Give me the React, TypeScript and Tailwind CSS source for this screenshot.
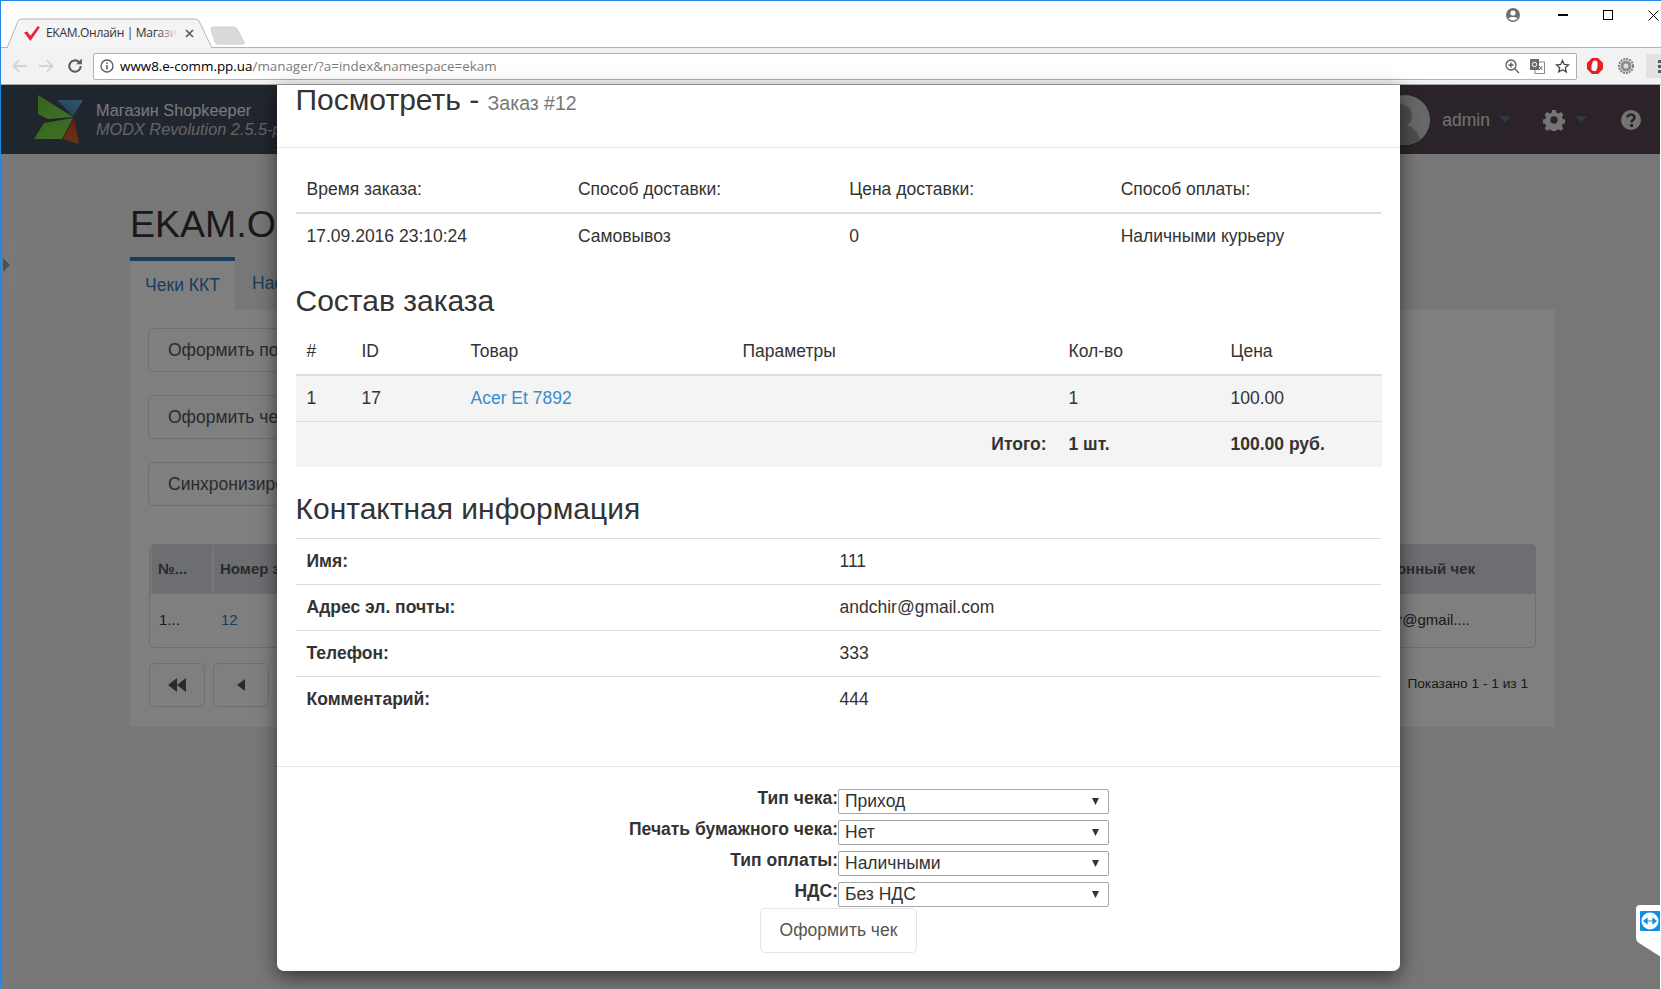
const Caret = ({ className = '' }: { className?: string }) => (
  <svg width="12" height="7" viewBox="0 0 12 7" className={className}>
    <path d="M0 0h12L6 7z" fill="currentColor" />
  </svg>
);

// Browser chrome at the top of the window
const BrowserBar = () => (
  <div className="font-['Open_Sans',sans-serif]">
    <div className="relative flex h-[48px] border-b border-[#b4b4b4] bg-white">
      <div className="relative z-10 ml-[7px] mt-[18px] flex h-[30px] w-[206px] items-center pl-[17px]">
        <svg className="absolute inset-0" width="206" height="30" viewBox="0 0 206 30">
          <path d="M0 30 11 3Q12 1 15 1H188Q191 1 192 3L205 30" fill="#f4f4f4" stroke="#b4b4b4" />
        </svg>
        <svg className="relative -ml-[1px]" width="18" height="16" viewBox="0 0 17 15">
          <path d="M1 7l3-1 3 4 7-9 2 1-9 13z" fill="#ee2436" />
        </svg>
        <div className="relative ml-[5px] w-[132px] overflow-hidden">
          <span className="block whitespace-nowrap text-[12px] tracking-[-0.3px] text-[#333]">EKAM.Онлайн | Магазин</span>
          <div className="absolute inset-y-0 right-0 w-[22px] bg-gradient-to-r from-transparent to-[#f4f4f4]" />
        </div>
        <svg className="relative ml-[7px]" width="9" height="9" viewBox="0 0 9 9">
          <path d="M1 1l7 7M8 1L1 8" stroke="#5a5a5a" strokeWidth="1.7" />
        </svg>
      </div>
      <svg className="mt-[26px] -ml-[3px]" width="36" height="20" viewBox="0 0 36 20">
        <path d="M1 3Q1 1 3 1H24Q26 1 27 3L34 16Q35 18 33 18H8Q6 18 5 16z" fill="#dadada" stroke="#cfcfcf" />
      </svg>
      <svg className="absolute left-[1505px] top-[7px]" width="16" height="16" viewBox="0 0 16 16">
        <circle cx="8" cy="8" r="7" fill="#6e6e6e" />
        <circle cx="8" cy="6" r="2.6" fill="#fff" />
        <path d="M3.4 11.6C4.5 9.6 11.5 9.6 12.6 11.6 11 14 5 14 3.4 11.6z" fill="#fff" />
      </svg>
      <div className="absolute left-[1558px] top-[14px] h-[1.5px] w-[10px] bg-black" />
      <div className="absolute left-[1603px] top-[10px] h-[10px] w-[10px] border border-black" />
      <svg className="absolute left-[1648px] top-[10px]" width="11" height="11" viewBox="0 0 11 11">
        <path d="M.5.5l10 10M10.5.5l-10 10" stroke="#000" strokeWidth="1" />
      </svg>
    </div>
    <div className="flex h-[37px] items-center border-b border-[#a8a8a8] bg-[#f2f2f2]">
      <div className="flex w-[93px] items-center pl-[11px]">
        <svg width="16" height="16" viewBox="0 0 14 14" fill="none" stroke="#d4d4d4" strokeWidth="1.6">
          <path d="M14 7H2M7 2 2 7l5 5" />
        </svg>
        <svg className="ml-[12px]" width="16" height="16" viewBox="0 0 14 14" fill="none" stroke="#d4d4d4" strokeWidth="1.6">
          <path d="M0 7h12M7 2l5 5-5 5" />
        </svg>
        <svg className="ml-[12px]" width="16" height="16" viewBox="0 0 14 14" fill="none" stroke="#5a5a5a" strokeWidth="1.8">
          <path d="M12 7a5 5 0 1 1-1.5-3.5" />
          <path d="M13 .5v5H8z" fill="#5a5a5a" stroke="none" />
        </svg>
      </div>
      <div className="flex h-[27px] w-[1484px] items-center rounded-[2px] border border-[#b0b0b0] bg-white pl-[6px] pr-[6px]">
        <svg width="14" height="14" viewBox="0 0 14 14" fill="none" stroke="#5a5a5a" strokeWidth="1.3">
          <circle cx="7" cy="7" r="6" />
          <path d="M7 6v4.5M7 3.5v1.5" strokeWidth="1.5" />
        </svg>
        <span className="ml-[6px] whitespace-nowrap text-[13.400px] text-black">
          www8.e-comm.pp.ua<span className="text-[#7b7b7b]">/manager/?a=index&amp;namespace=ekam</span>
        </span>
        <svg className="ml-auto" width="15" height="15" viewBox="0 0 15 15" fill="none" stroke="#5a5a5a" strokeWidth="1.3">
          <circle cx="6" cy="6" r="5" />
          <path d="M3.5 6h5M6 3.5v5M9.5 9.5 14 14" />
        </svg>
        <svg className="ml-[10px]" width="15" height="15" viewBox="0 0 15 15">
          <rect x="5" y="3" width="9.5" height="11.5" fill="#fff" stroke="#8a8a8a" />
          <rect x="0" y="0" width="9" height="11" fill="#6b6b6b" />
          <circle cx="4.5" cy="5.5" r="2.2" fill="none" stroke="#fff" />
          <path d="M9 7l3.5 4M12.5 7 9 11" stroke="#6b6b6b" />
        </svg>
        <svg className="ml-[10px]" width="15" height="15" viewBox="0 0 15 15" fill="none" stroke="#444" strokeWidth="1.3">
          <path d="M7.5 1.5l1.8 4 4.2.4-3.2 2.8 1 4.3-3.8-2.3-3.8 2.3 1-4.3L1.500 5.900l4.200-.4z" />
        </svg>
      </div>
      <svg className="ml-[10px]" width="16" height="16" viewBox="0 0 16 16">
        <path d="M5 0h6l5 5v6l-5 5H5l-5-5V5z" fill="#ea1c24" />
        <path d="M4.500 11.500V7L5.500 5V3.500h1.200V2.500h2.600v1h1.200V9L9 13H6z" fill="#fff" />
      </svg>
      <svg className="ml-[15px]" width="16" height="16" viewBox="0 0 16 16">
        <circle cx="8" cy="8" r="7" fill="none" stroke="#7c7c7c" strokeWidth="2" strokeDasharray="2 1" />
        <circle cx="8" cy="8" r="5.500" fill="#8c8c8c" />
        <circle cx="8" cy="8" r="2.500" fill="#dcdcdc" />
      </svg>
      <div className="ml-[12px] flex h-[24px] flex-1 items-center justify-end bg-[#e2e2e2]">
        <div className="flex flex-col gap-[2px]">
          <span className="h-[3px] w-[3px] bg-[#5a5a5a]" />
          <span className="h-[3px] w-[3px] bg-[#5a5a5a]" />
          <span className="h-[3px] w-[3px] bg-[#5a5a5a]" />
        </div>
      </div>
    </div>
  </div>
);

// MODX manager page behind the dialog
const ManagerHeader = () => (
  <div className="flex h-[69px] items-center bg-gradient-to-r from-[#3e4e5c] to-[#584652] pl-[33px] text-white">
    <svg width="52" height="50" viewBox="0 0 52 50">
      <defs>
        <linearGradient id="mb" x1="0" y1="1" x2="1" y2="0">
          <stop offset="0" stopColor="#3f78a8" />
          <stop offset="1" stopColor="#62b0ea" />
        </linearGradient>
        <linearGradient id="mr" x1="0" y1="0" x2="0" y2="1">
          <stop offset="0" stopColor="#e8341c" />
          <stop offset="1" stopColor="#c86a30" />
        </linearGradient>
        <linearGradient id="mg" x1="0" y1="0" x2="1" y2="1">
          <stop offset="0" stopColor="#6cc83c" />
          <stop offset="1" stopColor="#86e04c" />
        </linearGradient>
      </defs>
      <path d="M5 0 40 22 15 24 5 19z" fill="url(#mg)" />
      <path d="M24 5H50L40 21z" fill="url(#mb)" />
      <path d="M11 28 40 23 29 44H1z" fill="url(#mg)" />
      <path d="M41 23 46 49 30 44z" fill="url(#mr)" />
    </svg>
    <div className="ml-[11px] mt-[1px] whitespace-nowrap text-[16.300px] leading-[19px] text-[#f2f2f2]">
      <div>Магазин Shopkeeper</div>
      <div className="italic text-[#c8c8c8]">MODX Revolution 2.5.5-pl</div>
    </div>
    <div className="ml-auto flex items-center text-[#e4e4e4]">
      <div className="relative h-[50px] w-[50px] overflow-hidden rounded-full bg-[#d0d0d0]">
        <div className="absolute left-[8px] top-[9px] h-[24px] w-[24px] rounded-full bg-[#9a9a9a]" />
        <div className="absolute left-[-2px] top-[30px] h-[34px] w-[42px] rounded-full bg-[#9a9a9a]" />
      </div>
      <span className="ml-[12px] mt-[2px] text-[17.500px]">admin</span>
      <Caret className="ml-[9px] text-[#5c7076]" />
      <svg className="ml-[32px]" width="22" height="22" viewBox="0 0 24 24">
        <path
          fill="#e8e8e8"
          fillRule="evenodd"
          d="M10 1h4l.6 3 2.300 1 2.600-1.700 2.800 2.800-1.700 2.600 1 2.300 3 .6v4l-3 .6-1 2.300 1.700 2.600-2.800 2.800-2.600-1.700-2.300 1-.6 3h-4l-.6-3-2.300-1-2.600 1.700-2.800-2.800 1.700-2.600-1-2.300-3-.6v-4l3-.6 1-2.300L1.700 6.100 4.500 3.300l2.600 1.700 2.300-1zM12 8a4 4 0 1 0 0 8 4 4 0 0 0 0-8z"
        />
      </svg>
      <Caret className="ml-[10px] text-[#5c7076]" />
      <svg className="ml-[34px] mr-[20px]" width="20" height="20" viewBox="0 0 20 20">
        <circle cx="10" cy="10" r="10" fill="#e8e8e8" />
        <path d="M6.500 7.500C6.500 3.500 13.500 3.500 13.500 7.500 13.500 10 10.500 9.800 10.500 12.500" fill="none" stroke="#584652" strokeWidth="2.600" />
        <rect x="9" y="14" width="3" height="3" fill="#584652" />
      </svg>
    </div>
  </div>
);

const GhostButton = ({ children }: { children: string }) => (
  <div className="flex h-[44px] w-[400px] items-center rounded-[5px] border border-[#ddd] bg-white pl-[19px] text-[17.500px] text-[#555]">
    {children}
  </div>
);

const ManagerPage = () => (
  <div className="flex h-[835px] bg-[#eeeeee]">
    <div className="flex w-[10px] flex-col bg-[#f3f3f3]">
      <div className="mt-[85px] flex h-[51px] w-[15px] shrink-0 items-center rounded-r-[3px] bg-[#f3f3f3] pl-[3px]">
        <svg width="7" height="14" viewBox="0 0 7 14">
          <path d="M0 0l7 7-7 7z" fill="#9aa4ad" />
        </svg>
      </div>
    </div>
    <div className="ml-[120px] w-[1425px] pt-[50px]">
      <h1 className="h-[53px] text-[37.500px] leading-[41px] text-[#333]">EKAM.Онлайн</h1>
      <div className="flex h-[53px]">
        <div className="flex w-[105px] items-center justify-center border-t-[4px] border-[#337ab7] bg-white text-[17.500px] text-[#337ab7]">
          Чеки ККТ
        </div>
        <div className="ml-[17px] flex items-center text-[17.500px] text-[#337ab7]">Настройки</div>
      </div>
      <div className="h-[417px] bg-white pl-[18px] pr-[19px] pt-[18px]">
        <div className="flex flex-col gap-[23px]">
          <GhostButton>Оформить полный чек</GhostButton>
          <GhostButton>Оформить чек возврата</GhostButton>
          <GhostButton>Синхронизировать</GhostButton>
        </div>
        <div className="ml-[1px] mt-[38px] overflow-hidden rounded-[5px] border border-[#ddd] text-[15px]">
          <div className="flex h-[49px] items-center bg-[#dadde2] font-bold text-[#555]">
            <div className="flex h-full w-[64px] items-center border-x-2 border-[#eee] pl-[6px]">№...</div>
            <div className="pl-[6px]">Номер заказа</div>
            <div className="ml-auto pr-[60px]">Электронный чек</div>
          </div>
          <div className="flex h-[53px] items-center text-[#333]">
            <div className="w-[65px] pl-[9px]">1...</div>
            <div className="pl-[6px] text-[#337ab7]">12</div>
            <div className="ml-auto pr-[65px]">andchir@gmail....</div>
          </div>
        </div>
        <div className="ml-[1px] mt-[15px] flex items-start">
          <div className="flex h-[44px] w-[56px] items-center justify-center rounded-[5px] border border-[#ddd]">
            <svg width="18" height="14" viewBox="0 0 18 14">
              <path d="M9 0v14L0 7zM18 0v14L9 7z" fill="#555" />
            </svg>
          </div>
          <div className="ml-[8px] flex h-[44px] w-[56px] items-center justify-center rounded-[5px] border border-[#ddd]">
            <svg width="8" height="12" viewBox="0 0 8 12">
              <path d="M8 0v12L0 6z" fill="#555" />
            </svg>
          </div>
          <span className="ml-auto mr-[8px] mt-[11px] text-[13.700px] text-[#333]">Показано 1 - 1 из 1</span>
        </div>
      </div>
    </div>
  </div>
);

const Th = ({ children }: { children?: string }) => (
  <th className="h-[47px] border-b-[2px] border-[#ddd] px-[11px] text-left font-normal">{children}</th>
);

const Td = ({ children, className = '' }: { children?: React.ReactNode; className?: string }) => (
  <td className={`h-[46px] px-[11px] ${className}`}>{children}</td>
);

const contacts = [
  ['Имя:', '111'],
  ['Адрес эл. почты:', 'andchir@gmail.com'],
  ['Телефон:', '333'],
  ['Комментарий:', '444'],
];

const formRows = [
  ['Тип чека:', 'Приход'],
  ['Печать бумажного чека:', 'Нет'],
  ['Тип оплаты:', 'Наличными'],
  ['НДС:', 'Без НДС'],
];

const OrderDialog = () => (
  <div className="absolute left-[277px] top-[85px] h-[886px] w-[1123px] overflow-hidden rounded-b-[7px] bg-white text-[17.500px] leading-[25px] text-[#333] shadow-[0_6px_19px_rgba(0,0,0,0.55)]">
    <div className="border-b border-[#e5e5e5] pb-[29px] pl-[18.500px]">
      <h4 className="text-[30px] leading-[29px]">
        Посмотреть - <small className="text-[19.500px] text-[#777]">Заказ #12</small>
      </h4>
    </div>
    <div className="pl-[18.500px] pr-[19px] pt-[18px]">
      <table className="w-full table-fixed border-collapse">
        <thead>
          <tr>
            <Th>Время заказа:</Th>
            <Th>Способ доставки:</Th>
            <Th>Цена доставки:</Th>
            <Th>Способ оплаты:</Th>
          </tr>
        </thead>
        <tbody>
          <tr>
            <Td>17.09.2016 23:10:24</Td>
            <Td>Самовывоз</Td>
            <Td>0</Td>
            <Td>Наличными курьеру</Td>
          </tr>
        </tbody>
      </table>
      <h3 className="mb-[11px] mt-[25px] text-[30px] leading-[33px]">Состав заказа</h3>
      <table className="w-full table-fixed border-collapse">
        <colgroup>
          <col className="w-[55px]" />
          <col className="w-[109px]" />
          <col className="w-[272px]" />
          <col className="w-[326px]" />
          <col className="w-[162px]" />
          <col className="w-[162px]" />
        </colgroup>
        <thead>
          <tr>
            <Th>#</Th>
            <Th>ID</Th>
            <Th>Товар</Th>
            <Th>Параметры</Th>
            <Th>Кол-во</Th>
            <Th>Цена</Th>
          </tr>
        </thead>
        <tbody>
          <tr className="bg-[#f4f4f4]">
            <Td>1</Td>
            <Td>17</Td>
            <Td>
              <a className="text-[#3b8cc8]">Acer Et 7892</a>
            </Td>
            <Td />
            <Td>1</Td>
            <Td>100.00</Td>
          </tr>
          <tr className="border-t border-[#ddd] bg-[#f4f4f4] font-bold">
            <Td />
            <Td />
            <Td />
            <Td className="text-right">Итого:</Td>
            <Td>1 шт.</Td>
            <Td>100.00 руб.</Td>
          </tr>
        </tbody>
      </table>
      <h3 className="mb-[13px] mt-[25px] text-[30px] leading-[33px]">Контактная информация</h3>
      <table className="w-full table-fixed border-collapse">
        <colgroup>
          <col className="w-[533px]" />
          <col />
        </colgroup>
        <tbody>
          {contacts.map(([label, value]) => (
            <tr key={label} className="border-t border-[#ddd]">
              <Td className="font-bold">{label}</Td>
              <Td>{value}</Td>
            </tr>
          ))}
        </tbody>
      </table>
    </div>
    <div className="mt-[43px] border-t border-[#e5e5e5] pt-[22px]">
      <div className="flex flex-col gap-[6px]">
        {formRows.map(([label, value]) => (
          <div key={label} className="flex h-[25px]">
            <label className="w-[561px] text-right font-bold leading-[18px]">{label}</label>
            <div className="relative h-[25px] w-[271px]">
              <select
                defaultValue={value}
                className="h-full w-full appearance-none rounded-[2px] border border-[#a6a6a6] bg-white pl-[6px] text-[17.500px] leading-[23px] text-[#333]"
              >
                <option>{value}</option>
              </select>
              <svg className="pointer-events-none absolute right-[10px] top-[9px]" width="7" height="7" viewBox="0 0 7 7">
                <path d="M0 0h7L3.500 7z" fill="#333" />
              </svg>
            </div>
          </div>
        ))}
      </div>
      <div className="mt-[1px] flex justify-center">
        <button className="h-[45px] w-[157px] rounded-[5px] border border-[#e6e6e6] bg-white text-[17.500px] text-[#555]">
          Оформить чек
        </button>
      </div>
    </div>
  </div>
);

const TeamViewerTab = () => (
  <div className="absolute right-0 top-[905px]">
    <svg width="25" height="52" viewBox="0 0 25 52">
      <path d="M25 0H4Q0 0 0 4V33Q0 36 3 38L25 52z" fill="#fff" />
      <rect x="4" y="6" width="20" height="20" rx="1" fill="#0e8ee9" />
      <circle cx="14" cy="16" r="8.500" fill="#fff" />
      <path d="M8 16h12M8 16l3-2.500v5zM20 16l-3-2.500v5z" fill="#0e8ee9" stroke="#0e8ee9" strokeWidth="1.200" />
    </svg>
  </div>
);

export default function App() {
  return (
    <div className="relative h-[989px] w-[1661px] overflow-hidden bg-white font-['Liberation_Sans',Arial,sans-serif]">
      <BrowserBar />
      <ManagerHeader />
      <ManagerPage />
      <div className="absolute inset-x-0 bottom-0 top-[85px] bg-black/50" />
      <OrderDialog />
      <TeamViewerTab />
      <div className="absolute inset-x-0 top-0 h-px bg-[#1e88e5]" />
      <div className="absolute inset-y-0 left-0 w-px bg-[#1e88e5]" />
      <div className="absolute bottom-0 right-0 top-[85px] w-px bg-white" />
    </div>
  );
}
